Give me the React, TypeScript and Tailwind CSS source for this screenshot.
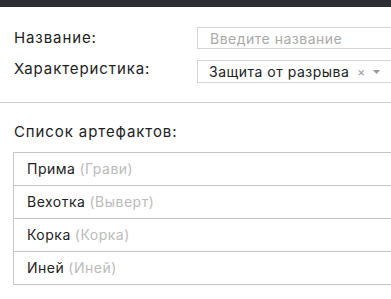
const artefacts = [
  { name: 'Прима', alt: 'Грави' },
  { name: 'Вехотка', alt: 'Выверт' },
  { name: 'Корка', alt: 'Корка' },
  { name: 'Иней', alt: 'Иней' },
];

export default function App() {
  return (
    <div className="w-[391px] h-[299px] overflow-hidden bg-white text-[#222] font-['Inter',sans-serif] text-[15px] tracking-[0.9px]">
      <div className="h-[7px] bg-[#2c2e33]" />

      <div className="pt-[20px] pl-[14px] border-b border-[#cfcfcf] pb-[19px]">
        <div className="flex items-center h-[22px]">
          <div className="w-[183px] shrink-0">Название:</div>
          <div className="w-[220px] shrink-0 h-[22px] border border-[#d4d4d4] flex items-center pl-[12px] text-[#aaa] text-[14px] tracking-[0.5px]">
            Введите название
          </div>
        </div>
        <div className="flex items-center h-[23px] mt-[11px]">
          <div className="w-[183px] shrink-0 -mt-[5px]">Характеристика:</div>
          <div className="w-[220px] shrink-0 h-[23px] border border-[#d4d4d4] flex items-center pl-[11px] text-[14px] tracking-[0.5px]">
            <span>Защита от разрыва</span>
            <span className="ml-[8px] text-[#999] text-[12px]">×</span>
            <svg className="ml-[7px]" width="7" height="4" viewBox="0 0 7 4">
              <path d="M0 0h7L3.5 4z" fill="#999" />
            </svg>
          </div>
        </div>
      </div>

      <div className="pl-[13px] pt-[18px]">
        <div className="pl-[1px] mb-[8px]">Список артефактов:</div>
        <div className="w-[420px] border-l border-t border-[#c4c4c4] text-[14px] tracking-[0.5px]">
          {artefacts.map((a) => (
            <div key={a.name} className="h-[33px] border-b border-[#c4c4c4] flex items-center pl-[13px]">
              <span>{a.name}</span>
              <span className="ml-[4px] text-[#bbb]">({a.alt})</span>
            </div>
          ))}
        </div>
      </div>
    </div>
  );
}
